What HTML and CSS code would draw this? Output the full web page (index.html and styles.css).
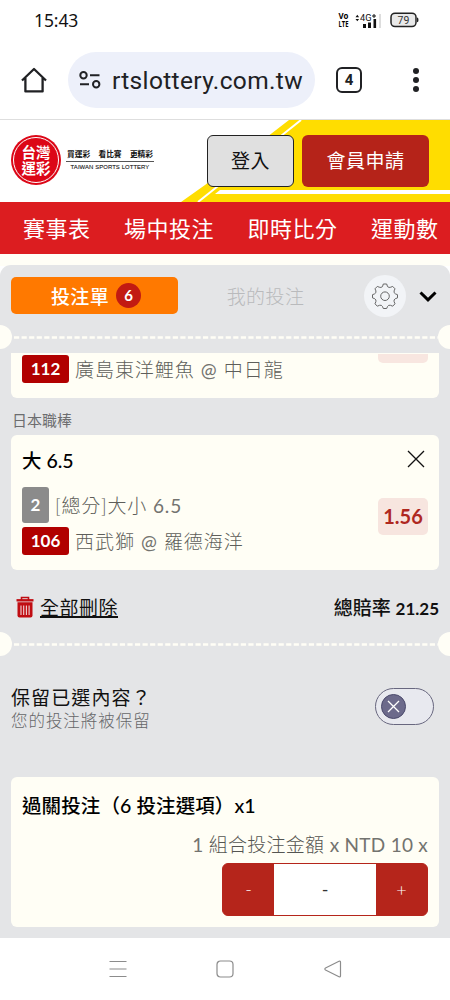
FILE: index.html
```html
<!DOCTYPE html>
<html lang="zh-Hant">
<head>
<meta charset="utf-8">
<meta name="viewport" content="width=device-width, initial-scale=1">
<title>台灣運彩 投注單</title>
<link rel="stylesheet" href="styles.css">
</head>
<body>
<div class="phone">
  <div class="status">
    <span class="clock">15:43</span>
    <div class="status-icons">
      <svg class="volte" width="12" height="16" viewBox="0 0 12 16">
        <text x="0.500" y="7.300" textLength="10" lengthAdjust="spacingAndGlyphs">Vo</text>
        <text x="0.500" y="15" textLength="10" lengthAdjust="spacingAndGlyphs">LTE</text>
      </svg>
      <svg class="signal" width="27" height="17" viewBox="0 0 27 17">
        <path d="M0.500 5.200L2.300 2.800L4.100 5.200M0.500 7L2.300 9.200L4.100 7" fill="#111"/>
        <text x="5" y="8.600" class="net" textLength="11.500" lengthAdjust="spacingAndGlyphs">4G</text>
        <path d="M17 4h4M19 2v4" stroke="#111" stroke-width="1"/>
        <path d="M8 12h3v4H8zM13 10.500h3v5.500h-3zM18.500 7h2.600V16h-2.600z" fill="#111"/>
        <path d="M24 2h2v14h-2z" fill="#ddd"/>
      </svg>
      <svg class="battery" width="30" height="16" viewBox="0 0 30 16">
        <rect x="1" y="1.200" width="25" height="13.400" rx="4" fill="#e9e9e9" stroke="#222" stroke-width="1.500"/>
        <path d="M27 5.500q1.500 0 1.500 2.400t-1.500 2.400z" fill="#222"/>
        <text x="13.500" y="11.700" text-anchor="middle" class="level">79</text>
      </svg>
    </div>
  </div>

  <div class="browser">
    <svg class="home" width="28" height="28" viewBox="0 0 28 28" fill="none" stroke="#202124" stroke-width="2.300" stroke-linejoin="round">
      <path d="M2 14.500L14 3L26 14.500M5.400 12V25.400H22.600V12"/>
    </svg>
    <div class="address">
      <svg width="22" height="18" viewBox="0 0 22 18" fill="none" stroke="#202124" stroke-width="2">
        <circle cx="4.500" cy="4.300" r="3.200"/><path d="M11 4.300h9.500M1 13.300h9"/><circle cx="17.200" cy="13.300" r="3.200"/>
      </svg>
      <span class="url">rtslottery.com.tw</span>
    </div>
    <span class="tabcount">4</span>
    <span class="more"><i></i><i></i><i></i></span>
  </div>

  <header class="site">
    <svg class="site-bg" width="450" height="82" viewBox="0 0 450 82">
      <path d="M289 0H450V82H181L205 65Z" fill="#fd0"/>
      <path d="M301 0L198 82" stroke="#fff" stroke-width="2"/>
      <path d="M220 70H450V74H215Z" fill="#fff"/>
    </svg>
    <div class="brand">
      <span class="seal"><span class="seal-ring"><b>台灣</b><b>運彩</b></span></span>
      <div class="slogan">
        <div class="slogan-zh"><span>買運彩</span><span>看比賽</span><span>更精彩</span></div>
        <div class="slogan-en">TAIWAN SPORTS LOTTERY</div>
      </div>
    </div>
    <button class="btn login">登入</button>
    <button class="btn join">會員申請</button>
  </header>

  <nav class="menu"><span>賽事表</span><span>場中投注</span><span>即時比分</span><span>運動數</span></nav>

  <main class="slip">
    <div class="tabs">
      <div class="tab active">投注單<span class="count">6</span></div>
      <div class="tab idle">我的投注</div>
      <span class="gear">
        <svg width="28" height="28" viewBox="0 0 28 28" fill="none" stroke="#666" stroke-width="1">
          <path stroke-linejoin="round" d="M12.300 2H15.700L16.500 4.600Q18 6 19.800 5.200L21.700 4.400L24 6.800L23.100 8.900Q22.500 11 24.500 11.900L26.500 12.700V15.900L24.300 16.700Q22.500 17.700 23.100 19.700L24 21.800L21.700 24.200L19.500 23.300Q17.500 22.700 16.500 24.500L15.700 26.500H12.300L11.500 24.500Q10.500 22.700 8.500 23.300L6.300 24.200L4 21.800L4.900 19.700Q5.500 17.700 3.700 16.700L1.500 15.900V12.700L3.500 11.900Q5.500 11 4.900 8.900L4 6.800L6.300 4.400L8.200 5.200Q10 6 11.500 4.600Z"/>
          <circle cx="14" cy="14.200" r="4.300"/>
        </svg>
      </span>
      <svg class="chevron" width="18" height="12" viewBox="0 0 18 12" fill="none" stroke="#000" stroke-width="3"><path d="M1.500 1.500L9 8.800L16.500 1.500"/></svg>
    </div>

    <div class="perforation"><svg width="450" height="3"><path d="M14 1.500H438" stroke="#fffef6" stroke-width="2.600" stroke-dasharray="5.200 2.360"/></svg></div>

    <section class="card card-cut">
      <div class="pick"><span class="badge red">112</span><span class="team">廣島東洋鯉魚 <i>@</i> 中日龍</span></div>
      <span class="odds-tail"></span>
    </section>

    <div class="league">日本職棒</div>

    <section class="card card-bet">
      <div class="bet-head">
        <h2>大 6.5</h2>
        <svg width="18" height="18" viewBox="0 0 18 18" stroke="#111" stroke-width="1.300"><path d="M1 1L17 17M17 1L1 17"/></svg>
      </div>
      <div class="bet-body">
        <div class="lines">
          <div class="pick"><span class="badge gray">2</span><span class="market">[總分]大小 <i>6.5</i></span></div>
          <div class="pick"><span class="badge red">106</span><span class="team">西武獅 <i>@</i> 羅德海洋</span></div>
        </div>
        <span class="odds">1.56</span>
      </div>
    </section>

    <div class="totals">
      <svg width="18" height="22" viewBox="0 0 18 22" fill="none" stroke="#c00d12">
        <path d="M0.500 4.300H17.500" stroke-width="2.400"/><path d="M5.500 4V1.500H12.500V4" stroke-width="1.600"/>
        <path d="M1.500 6.300H16.500V19.500Q16.500 21.500 14.500 21.500H3.500Q1.500 21.500 1.500 19.500Z" fill="#c00d12" stroke="none"/>
        <path d="M5 9.500V19M7.700 9.500V19M10.400 9.500V19M13.100 9.500V19" stroke="#efd3d5" stroke-width="1.100"/>
      </svg>
      <a class="clear">全部刪除</a>
      <span class="sum">總賠率 <b>21.25</b></span>
    </div>

    <div class="perforation"><svg width="450" height="3"><path d="M14 1.500H438" stroke="#fffef6" stroke-width="2.600" stroke-dasharray="5.200 2.360"/></svg></div>

    <div class="keep">
      <div class="keep-text">
        <div class="keep-title">保留已選內容？</div>
        <div class="keep-sub">您的投注將被保留</div>
      </div>
      <span class="switch"><span class="knob"><svg width="13" height="13" viewBox="0 0 13 13" stroke="#fff" stroke-width="1.300"><path d="M1 1L12 12M12 1L1 12"/></svg></span></span>
    </div>

    <section class="card card-stake">
      <h2 class="parlay">過關投注（6 投注選項）x1</h2>
      <div class="formula"><i>1</i> 組合投注金額 <i>x NTD 10 x</i></div>
      <div class="stepper"><span class="step">-</span><span class="value">-</span><span class="step">+</span></div>
    </section>
  </main>

  <footer class="system">
    <svg width="18" height="18" viewBox="0 0 18 18" stroke="#8c8c8c" stroke-width="1.200"><path d="M0.500 1.500H17.500M0.500 9H17.500M0.500 16.500H17.500"/></svg>
    <svg width="18" height="18" viewBox="0 0 18 18" fill="none" stroke="#8c8c8c" stroke-width="1.200"><rect x="1" y="1" width="16" height="16" rx="3.500"/></svg>
    <svg width="18" height="18" viewBox="0 0 18 18" fill="none" stroke="#8c8c8c" stroke-width="1.200" stroke-linejoin="round"><path d="M15 1.300Q16.500 0.800 16.500 2.200V15.800Q16.500 17.200 15 16.700L1.500 10Q0.200 9 1.500 8Z"/></svg>
  </footer>
</div>
</body>
</html>
```

FILE: styles.css
```css
* { box-sizing: border-box; }
body { margin: 0; background: #fff; font-family: Lato, "Noto Sans CJK TC", sans-serif; }
h2 { margin: 0; }
svg { display: block; flex: none; }
.phone { width: 450px; height: 1000px; overflow: hidden; display: flex; flex-direction: column; background: #fff; white-space: nowrap; }

.status { height: 40px; display: flex; justify-content: space-between; align-items: center; padding: 0 32px 0 34px; }
.clock { font: 400 17.5px/20px "Noto Sans", sans-serif; letter-spacing: -0.1px; color: #111; }
.status-icons { display: flex; align-items: center; }
.volte { margin-right: 5px; font: 700 8.500px "Open Sans", sans-serif; fill: #000; }
.signal { margin-right: 8px; }
.net { font: 9px Roboto, sans-serif; fill: #111; }
.level { font: 10.500px Roboto, sans-serif; fill: #333; }
.battery { margin-right: -2px; }

.browser { height: 80px; display: flex; align-items: center; padding: 0 29px 0 20px; border-bottom: 1px solid #dedede; }
.address { width: 247px; height: 56px; margin-left: 20px; padding-left: 11px; border-radius: 28px; background: #edf0fa; display: flex; align-items: center; }
.url { margin-left: 11px; font: 400 24.5px/30px Roboto, sans-serif; letter-spacing: 0.35px; color: #202124; padding-top: 3px; }
.tabcount { width: 26px; height: 26px; margin-left: 21px; border: 2.500px solid #202124; border-radius: 6px; display: flex; align-items: center; justify-content: center; font: 700 15px Roboto, sans-serif; color: #202124; }
.more { margin-left: auto; margin-right: 2px; display: flex; flex-direction: column; gap: 3px; }
.more i { width: 6px; height: 6px; border-radius: 50%; background: #202124; }

.site { height: 82px; position: relative; display: flex; align-items: center; padding: 0 21px 2px 11px; }
.site-bg { position: absolute; left: 0; top: 0; }
.brand { position: relative; display: flex; align-items: center; flex: 1; }
.seal { width: 50px; height: 50px; border-radius: 50%; background: #dc0717; padding: 2px; }
.seal-ring { width: 46px; height: 46px; border: 1px solid #fff; border-radius: 50%; display: flex; flex-direction: column; align-items: center; justify-content: center; padding-bottom: 1px; }
.seal b { font: 700 14.5px/15.500px "Noto Sans CJK TC", sans-serif; color: #fff; }
.slogan { margin-left: 5px; width: 88px; margin-top: -2px; }
.slogan-zh { display: flex; justify-content: space-between; padding: 0 1px; font: 700 7.700px/14px "Noto Sans CJK TC", sans-serif; color: #111; border-bottom: 1px solid #555; }
.slogan-en { font: 400 5.900px/10px "Liberation Sans", sans-serif; color: #111; text-align: center; letter-spacing: 0.1px; -webkit-text-stroke: 0.1px #111; }
.btn { position: relative; height: 52px; padding: 0; border-radius: 6px; font: 400 19px/24px "Noto Sans CJK TC", sans-serif; letter-spacing: 0.5px; margin-top: 2px; padding-bottom: 2px; }
.login { width: 87px; background: #e0e0e0; border: 1.500px solid #222; color: #111; }
.join { width: 127px; margin-left: 8px; background: #b52319; border: 0; color: #fff; }

.menu { height: 52px; background: #dc1d20; display: flex; align-items: center; gap: 33.700px; padding: 0 0 2px 23px; color: #fff; font: 400 22px/30px "Noto Sans CJK TC", sans-serif; letter-spacing: 0.45px; box-shadow: 0 12px 0 #fffef6; }

.slip { margin-top: 11px; height: 673px; background: #e4e5e7; border-radius: 11px 11px 0 0; position: relative; }
.tabs { height: 60px; display: flex; align-items: center; padding: 1px 13px 0 11px; }
.tab { height: 37px; display: flex; align-items: center; justify-content: center; font-size: 19px; letter-spacing: 0.4px; }
.active { width: 167px; border-radius: 5px; background: #ff7900; color: #fff; font-weight: 500; gap: 7px; padding-left: 3px; }
.count { width: 25px; height: 25px; border-radius: 50%; background: #c21a12; font: 700 15px/25px Lato, sans-serif; text-align: center; letter-spacing: 0; }
.idle { width: 176px; color: #b9babc; font-weight: 300; padding-right: 1px; }
.gear { width: 42px; height: 42px; margin-left: 10px; border-radius: 50%; background: #f2f4f7; display: flex; align-items: center; justify-content: center; }
.chevron { margin: 2px 0 0 13px; }

.perforation { height: 24px; display: flex; align-items: center; position: relative; padding-top: 1px; overflow: hidden; }
.perforation::before, .perforation::after { content: ""; position: absolute; top: 0; width: 24px; height: 24px; border-radius: 50%; background: #fffef6; }
.perforation::before { left: -12px; }
.perforation::after { right: -12px; }

.card { margin: 0 11px; background: #fffef5; border-radius: 6px; position: relative; }
.card-cut { height: 45px; margin-top: 4px; border-radius: 0 0 6px 6px; display: flex; justify-content: space-between; padding: 1px 11px 0; }
.odds-tail { width: 50px; height: 9px; border-radius: 0 0 5px 5px; background: #f8e6e0; }
.pick { display: flex; align-items: center; color: #5e5e5a; font-size: 19px; font-weight: 300; }
.pick i, .formula i { font-style: normal; font-weight: 400; color: #73736f; }
.card-cut .pick { height: 30px; }
.badge { height: 28px; border-radius: 3px; color: #fff; font: 700 17px/28px Lato, sans-serif; text-align: center; }
.red { width: 47px; background: #b10000; }
.gray { width: 27px; height: 36px; line-height: 36px; background: #8b8b8b; }
.team { margin-left: 6px; letter-spacing: 0.95px; padding-bottom: 1px; }
.market { margin-left: 6px; letter-spacing: 0.8px; padding-bottom: 1px; }
.league { height: 37px; padding: 11px 0 0 12px; font-size: 15px; line-height: 22px; font-weight: 400; color: #6c6d6f; }
.card-bet { height: 135px; padding: 10px 11px 0; }
.bet-head { height: 32px; display: flex; justify-content: space-between; align-items: center; padding: 0 3px 0 0; }
.bet-head h2 { font-size: 19.500px; font-weight: 500; line-height: 28px; color: #000; }
.bet-head svg { margin-top: -5px; }
.bet-body { display: flex; justify-content: space-between; align-items: center; margin-top: 8px; height: 71px; }
.lines { display: flex; flex-direction: column; gap: 4px; }
.odds { width: 50px; height: 37px; margin-top: -9px; border-radius: 5px; background: #f7e5df; color: #af281f; font: 700 20px/37px Lato, sans-serif; text-align: center; }

.totals { height: 62px; display: flex; align-items: center; padding: 11px 11px 0 16px; font-size: 19px; color: #111; }
.clear { margin-left: 6px; font-weight: 400; letter-spacing: 0.5px; text-decoration: underline; text-decoration-thickness: 1.500px; text-underline-offset: 1px; }
.sum { margin-left: auto; font-weight: 500; font-size: 19px; }
.sum b { font-size: 17px; font-weight: 700; }

.keep { display: flex; justify-content: space-between; align-items: center; height: 100px; padding: 0 16px 0 11px; }
.keep-text { padding-top: 5px; }
.keep-title { font-size: 19px; line-height: 24px; color: #111; letter-spacing: 1.1px; }
.keep-sub { font-size: 16.500px; line-height: 22px; color: #666769; letter-spacing: 0.95px; font-weight: 300; }
.switch { width: 59px; height: 37px; border: 1.500px solid #68677f; border-radius: 19px; background: #e8e9ef; padding: 5px; }
.knob { width: 25px; height: 25px; border-radius: 50%; background: #6c6a8b; border: 1px solid #4a496b; display: flex; align-items: center; justify-content: center; }

.card-stake { height: 150px; margin-top: 21px; padding: 15px 11px 0; }
.parlay { font-size: 19.500px; line-height: 28px; font-weight: 500; letter-spacing: 0.1px; }
.formula { margin-top: 11px; height: 32px; text-align: right; font-size: 19px; line-height: 28px; font-weight: 300; color: #555551; letter-spacing: 0.25px; }
.stepper { width: 206px; height: 53px; margin-left: auto; border: 1px solid #b5251b; border-radius: 6px; overflow: hidden; display: flex; background: #b5251b; }
.step { width: 51px; text-align: center; color: #fff; font-size: 18px; line-height: 51px; font-weight: 300; }
.value { flex: 1; background: #fff; color: #333; text-align: center; font-size: 18px; line-height: 51px; }

.system { flex: 1; display: flex; justify-content: center; gap: 89.500px; align-items: center; }
```
